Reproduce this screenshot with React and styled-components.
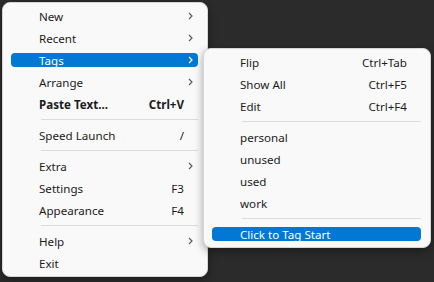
import React from "react";
import styled, { createGlobalStyle } from "styled-components";

const Global = createGlobalStyle`
  html, body {
    margin: 0;
    padding: 0;
    background: #2b2b2b;
    width: 434px;
    height: 282px;
    overflow: hidden;
  }
  body {
    font-family: "Noto Sans", "Open Sans", sans-serif;
    font-size: 11.6px;
  }
`;

const Stage = styled.div`
  position: relative;
  width: 434px;
  height: 282px;
`;

const Menu = styled.div`
  box-sizing: border-box;
  width: ${(p) => p.width}px;
  padding: 2px 0;
  background: #f9f9f9;
  border: 1px solid #d6d6d6;
  border-radius: 8px;
  box-shadow: 0 3px 8px rgba(0, 0, 0, 0.35);
`;

const MainMenu = styled(Menu)`
  margin: 2px 0 0 2px;
`;

const SubMenu = styled(Menu)`
  position: absolute;
  left: 203px;
  top: 46px;
`;

const Row = styled.div`
  position: relative;
  height: 22px;
  display: flex;
  align-items: center;
  color: #1b1b1b;
  font-weight: ${(p) => (p.bold ? 700 : 400)};
  z-index: 0;

  &::before {
    content: "";
    display: ${(p) => (p.active ? "block" : "none")};
    position: absolute;
    left: 8px;
    right: 9px;
    top: 4px;
    bottom: 4px;
    background: #0078d4;
    border-radius: 4px;
    z-index: -1;
  }
  ${(p) => p.active && "color: #ffffff;"}
`;

const Label = styled.span`
  flex: 1;
  padding-left: 36px;
  white-space: nowrap;
  line-height: 1;
  margin-top: 1px;
`;

const Shortcut = styled.span`
  white-space: nowrap;
  padding-right: ${(p) => p.pad}px;
  line-height: 1;
  margin-top: 1px;
`;

const Arrow = styled.span`
  width: 24px;
  display: flex;
  justify-content: flex-start;
  padding-left: 5px;
  box-sizing: border-box;
  color: ${(p) => (p.active ? "#ffffff" : "#5a5a5a")};
`;

const Sep = styled.div`
  height: 9px;
  display: flex;
  align-items: center;
  padding: 0 9px 0 38px;

  &::after {
    content: "";
    flex: 1;
    height: 1px;
    background: #dcdcdc;
  }
`;

const Chevron = () => (
  <svg width="5" height="8" viewBox="0 0 5 8">
    <path d="M1 1 L4 4 L1 7" fill="none" stroke="currentColor" strokeWidth="1.2" />
  </svg>
);

const MainItem = ({ label, shortcut, sub, bold, active }) => (
  <Row bold={bold} active={active}>
    <Label>{label}</Label>
    {shortcut && <Shortcut pad={sub ? 0 : 23}>{shortcut}</Shortcut>}
    {sub && (
      <Arrow active={active}>
        <Chevron />
      </Arrow>
    )}
  </Row>
);

const SubItem = ({ label, shortcut, active }) => (
  <Row active={active}>
    <Label>{label}</Label>
    {shortcut && <Shortcut pad={23}>{shortcut}</Shortcut>}
  </Row>
);

export default function App() {
  return (
    <Stage>
      <Global />
      <MainMenu width={206}>
        <MainItem label="New" sub />
        <MainItem label="Recent" sub />
        <MainItem label="Tags" sub active />
        <MainItem label="Arrange" sub />
        <MainItem label="Paste Text..." shortcut="Ctrl+V" bold />
        <Sep />
        <MainItem label="Speed Launch" shortcut="/" />
        <Sep />
        <MainItem label="Extra" sub />
        <MainItem label="Settings" shortcut="F3" />
        <MainItem label="Appearance" shortcut="F4" />
        <Sep />
        <MainItem label="Help" sub />
        <MainItem label="Exit" />
      </MainMenu>
      <SubMenu width={228}>
        <SubItem label="Flip" shortcut="Ctrl+Tab" />
        <SubItem label="Show All" shortcut="Ctrl+F5" />
        <SubItem label="Edit" shortcut="Ctrl+F4" />
        <Sep />
        <SubItem label="personal" />
        <SubItem label="unused" />
        <SubItem label="used" />
        <SubItem label="work" />
        <Sep />
        <SubItem label="Click to Tag Start" active />
      </SubMenu>
    </Stage>
  );
}
